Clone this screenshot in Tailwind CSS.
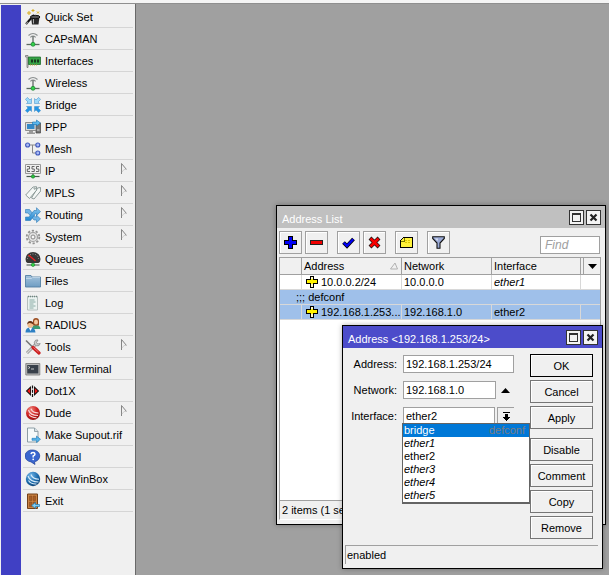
<!DOCTYPE html>
<html lang="en">
<head>
<meta charset="utf-8">
<meta name="viewport" content="width=device-width, initial-scale=1">
<title>WinBox</title>
<script src="https://cdn.jsdelivr.net/npm/@tailwindcss/browser@4"></script>
</head>
<body class="flex h-screen flex-col overflow-hidden bg-[#a0a0a0] font-['Liberation_Sans',Arial,sans-serif] text-[11px] leading-[14px] text-black">
<svg class="absolute size-0" aria-hidden="true">
  <defs>
    <linearGradient id="sky" x1="0" y1="0" x2="0" y2="1"><stop offset="0" stop-color="#8cc9ef"/><stop offset="1" stop-color="#1f86d1"/></linearGradient>
    <linearGradient id="folder" x1="0" y1="0" x2="0" y2="1"><stop offset="0" stop-color="#a4c3dc"/><stop offset="1" stop-color="#6f9dc3"/></linearGradient>
    <radialGradient id="blueball" cx=".35" cy=".25" r=".85"><stop offset="0" stop-color="#6fb4e8"/><stop offset=".6" stop-color="#1967a8"/><stop offset="1" stop-color="#0b3866"/></radialGradient>
    <radialGradient id="redball" cx=".35" cy=".25" r=".85"><stop offset="0" stop-color="#f08a80"/><stop offset=".5" stop-color="#cf2222"/><stop offset="1" stop-color="#8c0c0c"/></radialGradient>
    <symbol id="antenna" viewBox="0 0 16 16">
      <path d="M3.500 4.500Q8 .5 12.500 4.500M5.300 6.300Q8 4 10.700 6.300" fill="none" stroke="#8b9090" stroke-width="1.100"/>
      <path d="M8 5v8" stroke="#747b78" stroke-width="1.500"/>
      <path d="M1.500 13.500h13" stroke="#5c6a61" stroke-width="1.300"/>
      <circle cx="8" cy="13.300" r="2" fill="#35d04c" stroke="#16802b" stroke-width=".7"/>
    </symbol>
    <symbol id="sub" viewBox="0 0 6 11"><path d="M.5 11V.5L5.500 6.500" fill="none" stroke="#858585"/><path d="M5.500 6.500H3L1 9" fill="none" stroke="#cfcfcf"/></symbol>
    <symbol id="addr" viewBox="0 0 12 12" shape-rendering="crispEdges"><path d="M4 0h4v3h4v5H8v4H4V8H0V3h4z" fill="#000"/><path d="M5 1h2v3h4v3H7v4H5V7H1V4h4z" fill="#fff200"/><path d="M5 1h2v2H5zM5 8h2v3H5z" fill="#fffad0"/></symbol>
    <symbol id="max" viewBox="0 0 15 15" shape-rendering="crispEdges"><path d="M0 0h15v15H0z" fill="#333"/><path d="M1 1h13v13H1z" fill="#f4f4f4"/><path d="M3 3h9v9H3z" fill="#333"/><path d="M4 5h7v6H4z" fill="#f4f4f4"/></symbol>
    <symbol id="close" viewBox="0 0 15 15"><path d="M0 0h15v15H0z" fill="#333"/><path d="M1 1h13v13H1z" fill="#f4f4f4"/><path d="M4.500 4.500l6 6M10.500 4.500l-6 6" stroke="#222" stroke-width="2.200"/></symbol>
  </defs>
</svg>

<div class="h-1 shrink-0 border-b border-[#8f8f8f] bg-[#f4f4f4]"></div>
<div class="relative flex min-h-0 flex-1">
  <aside class="flex border-r border-[#696969] bg-[#f0f0f0] pl-px pt-px">
    <div class="w-5 bg-[#4040c4]"></div>
    <nav class="w-[114px] pl-0.5 pr-0.5 pt-px" aria-label="Main menu">
      <a href="#" class="flex h-[22px] items-center gap-1 border-b border-[#d5d5d5] pl-0.5">
        <svg class="size-4" viewBox="0 0 16 16"><path d="M1 15L9 6" stroke="#111" stroke-width="2"/><path d="M1 15l2-2" stroke="#888" stroke-width="1.500"/><path d="M6 8h8.500l-1 7.500H7z" fill="#292929"/><ellipse cx="10.200" cy="8" rx="4.800" ry="1.700" fill="#555" stroke="#111"/><path d="M8.500 10v4.500" stroke="#aaa"/><path d="M4 2v4M2 4h4M8 0v3M6.500 1.500h3M12 2.500l2 2M14 2.500L12 4.500" stroke="#d9ad1c" stroke-width="1"/></svg>Quick Set</a>
      <a href="#" class="flex h-[22px] items-center gap-1 border-b border-[#d5d5d5] pl-0.5"><svg class="size-4"><use href="#antenna"/></svg>CAPsMAN</a>
      <a href="#" class="flex h-[22px] items-center gap-1 border-b border-[#d5d5d5] pl-0.5">
        <svg class="size-4" viewBox="0 0 16 16"><path d="M.5 2.500h2.500v12H2V4H.5z" fill="#d8d8d8" stroke="#777" stroke-width=".8"/><path d="M3.500 4h12v7.500h-12z" fill="#36a346" stroke="#1d6d2c" stroke-width=".8"/><path d="M6 6.500h2v3H6zM9 6.500h2v3H9zM12 6.500h2v3h-2z" fill="#173a1d"/><path d="M5 12h8" stroke="#c7a43b" stroke-dasharray="1 1"/></svg>Interfaces</a>
      <a href="#" class="flex h-[22px] items-center gap-1 border-b border-[#d5d5d5] pl-0.5"><svg class="size-4"><use href="#antenna"/></svg>Wireless</a>
      <a href="#" class="flex h-[22px] items-center gap-1 border-b border-[#d5d5d5] pl-0.5">
        <svg class="size-4" viewBox="0 0 16 16" stroke="#3b89c4" stroke-width=".5"><path d="M6.500 6.500h-5L3 5 .4 2.400l2-2L5 3l1.500-1.500z" fill="#9ad8fa"/><path d="M9.500 6.500h5L13 5l2.600-2.600-2-2L11 3 9.500 1.500z" fill="#9ad8fa"/><path d="M6.500 9.500h-5L3 11 .4 13.600l2 2L5 13l1.500 1.500z" fill="#2495e4"/><path d="M9.500 9.500h5L13 11l2.600 2.600-2 2L11 13l-1.500 1.500z" fill="#2495e4"/></svg>Bridge</a>
      <a href="#" class="flex h-[22px] items-center gap-1 border-b border-[#d5d5d5] pl-0.5">
        <svg class="size-4" viewBox="0 0 16 16"><path d="M11 4h4.500v10H11z" fill="#777" stroke="#444" stroke-width=".7"/><path d="M12 11h2.500" stroke="#ddd"/><path d="M.5 3.500h10.500v8H.5z" fill="#ddd" stroke="#777" stroke-width=".8"/><path d="M2 5h7.500v5H2z" fill="#3488c6"/><path d="M4 12h4v1.500h2V15H2v-1.500h2z" fill="#999"/><path d="M7.500 5.500V3h4V1l4 3-4 3V5.500z" fill="#5cb8ee" stroke="#1770ad" stroke-width=".6"/></svg>PPP</a>
      <a href="#" class="flex h-[22px] items-center gap-1 border-b border-[#d5d5d5] pl-0.5">
        <svg class="size-4" viewBox="0 0 16 16"><path d="M4 4h7M7.500 4v8H11" fill="none" stroke="#888"/><g fill="#a9baf5" stroke="#4059bd" stroke-width="1.100"><circle cx="2.600" cy="4" r="2"/><circle cx="12.800" cy="4" r="2"/><circle cx="12.800" cy="12" r="2"/></g></svg>Mesh</a>
      <a href="#" class="flex h-[22px] items-center gap-1 border-b border-[#d5d5d5] pl-0.5">
        <svg class="size-4" viewBox="0 0 16 16"><path d="M.5 1.500h15v9H.5z" fill="#eee" stroke="#999"/><path d="M2 3.500h2.500V6H2.300v2.500H5M9.500 3.500H7V6h2.300v2.500H6.500M14 3.500h-2.500V6h2.300v2.500H11" fill="none" stroke="#555" stroke-width=".9"/><path d="M8 10.500V13" stroke="#555"/><path d="M1.500 13.500h13" stroke="#4a5a50" stroke-width="1.200"/><circle cx="8" cy="13.500" r="1.700" fill="#2cc33f" stroke="#157a28" stroke-width=".6"/></svg><span class="flex-1">IP</span><svg class="mb-1 mr-1.5 h-[11px] w-1.5"><use href="#sub"/></svg></a>
      <a href="#" class="flex h-[22px] items-center gap-1 border-b border-[#d5d5d5] pl-0.5">
        <svg class="size-4" viewBox="0 0 16 16" fill="#f4f7f6" stroke="#81918e" stroke-width=".9"><path d="M6.500 13l6-10 3-.5.2 3.500L9 14z"/><path d="M.7 10L8 2l3.500-.3.2 3.300L4.500 13.500z"/><circle cx="9.700" cy="3.600" r=".7"/></svg><span class="flex-1">MPLS</span><svg class="mb-1 mr-1.5 h-[11px] w-1.5"><use href="#sub"/></svg></a>
      <a href="#" class="flex h-[22px] items-center gap-1 border-b border-[#d5d5d5] pl-0.5">
        <svg class="size-4" viewBox="0 0 16 16" stroke="#2d79b5" stroke-width=".6"><path d="M.5 2.500h4l6 7.500h1V8l4 4-4 3.500v-2.500H9L3 6H.5z" fill="#70b4e6"/><path d="M.5 10H4l5-6.500h2.500V.7l4 4-4 3.800V6.500H10.500L5.500 13.500h-5z" fill="url(#sky)"/></svg><span class="flex-1">Routing</span><svg class="mb-1 mr-1.5 h-[11px] w-1.5"><use href="#sub"/></svg></a>
      <a href="#" class="flex h-[22px] items-center gap-1 border-b border-[#d5d5d5] pl-0.5">
        <svg class="size-4" viewBox="0 0 16 16" fill="none"><circle cx="8" cy="8" r="6.300" stroke="#929292" stroke-width="1.800" stroke-dasharray="2.200 1.760"/><circle cx="8" cy="8" r="4.500" fill="#e2e2e2" stroke="#a0a0a0" stroke-width="1.200"/><circle cx="8" cy="8" r="2" fill="#f7f7f7" stroke="#888"/></svg><span class="flex-1">System</span><svg class="mb-1 mr-1.5 h-[11px] w-1.5"><use href="#sub"/></svg></a>
      <a href="#" class="flex h-[22px] items-center gap-1 border-b border-[#d5d5d5] pl-0.5">
        <svg class="size-4" viewBox="0 0 16 16"><path d="M.5 8a7.500 7 0 0 1 15 0q0 3-2 4H2.500q-2-1-2-4z" fill="#383838"/><path d="M2.500 8a5.500 5 0 0 1 11 0" fill="none" stroke="#aaa" stroke-width="1" stroke-dasharray="1 1.500"/><path d="M3.500 4l7 6" stroke="#ee2020" stroke-width="1.300"/><path d="M1.500 14h13" stroke="#606a64" stroke-width="1.200"/><circle cx="8" cy="13.800" r="1.700" fill="#2fd545" stroke="#157a28" stroke-width=".6"/></svg>Queues</a>
      <a href="#" class="flex h-[22px] items-center gap-1 border-b border-[#d5d5d5] pl-0.5">
        <svg class="size-4" viewBox="0 0 16 16"><path d="M.5 14V2.500H6l1 1.500h8.500v10z" fill="url(#folder)" stroke="#5480a4" stroke-width=".9"/><path d="M1 5.500h5.500l1-1H15" fill="none" stroke="#c8dcec" stroke-width=".8"/></svg>Files</a>
      <a href="#" class="flex h-[22px] items-center gap-1 border-b border-[#d5d5d5] pl-0.5">
        <svg class="size-4" viewBox="0 0 16 16"><path d="M2.500 1.500h10v13.500h-10z" fill="#eaf2f0" stroke="#a6b2b0" stroke-width=".8"/><path d="M3 1.500h9.500" stroke="#6e8580" stroke-dasharray="1 1" stroke-width="1.500"/><path d="M4.500 5h5M4.500 7h6M4.500 9h4M4.500 11h6M4.500 13h4" stroke="#7fa39c" stroke-width=".9"/></svg>Log</a>
      <a href="#" class="flex h-[22px] items-center gap-1 border-b border-[#d5d5d5] pl-0.5">
        <svg class="size-4" viewBox="0 0 16 16"><path d="M7 12q0-4 4-4t4.500 4z" fill="#3d9b72"/><path d="M8 8.500V4q0-3 3-3t3 3v4.500z" fill="#9a4c20"/><ellipse cx="11" cy="5" rx="2" ry="2.500" fill="#f5c9a0"/><path d="M.5 15.500Q.5 10.500 5.300 10.500T10.500 15.500z" fill="#2e80c4"/><path d="M4 11l1.500 3L7 11z" fill="#fff"/><circle cx="5.300" cy="7.800" r="2.900" fill="#f1bb8c"/><path d="M2.300 7.500Q2 4 5.300 4t3 3.500Q6.500 5.500 4 6z" fill="#643014"/></svg>RADIUS</a>
      <a href="#" class="flex h-[22px] items-center gap-1 border-b border-[#d5d5d5] pl-0.5">
        <svg class="size-4" viewBox="0 0 16 16"><path d="M2 14L11 5" stroke="#8c8c8c" stroke-width="2.800"/><path d="M2 14L11 5" stroke="#d5d5d5" stroke-width="1.400"/><path d="M13 1a3 3 0 1 0 2.200 3.500L12.700 5 11.500 3.500z" fill="#ccc" stroke="#888" stroke-width=".8"/><path d="M1 1.500l7 7" stroke="#777" stroke-width="1.600"/><path d="M8 8.500l6 5.500" stroke="#cc2020" stroke-width="3.200" stroke-linecap="round"/><path d="M8.500 8.500l5 4.500" stroke="#f39191" stroke-width=".8"/></svg><span class="flex-1">Tools</span><svg class="mb-1 mr-1.5 h-[11px] w-1.5"><use href="#sub"/></svg></a>
      <a href="#" class="flex h-[22px] items-center gap-1 border-b border-[#d5d5d5] pl-0.5">
        <svg class="size-4" viewBox="0 0 16 16"><path d="M.8 2.500h14v11.500H.8z" fill="#bbb" stroke="#777" stroke-width=".8"/><path d="M2.200 4h11.200v8.500H2.200z" fill="#38404a"/><path d="M3.300 5.500l1.700 1-1.700 1M6 8h3" fill="none" stroke="#e8e8e8" stroke-width=".8"/></svg>New Terminal</a>
      <a href="#" class="flex h-[22px] items-center gap-1 border-b border-[#d5d5d5] pl-0.5">
        <svg class="size-4" viewBox="0 0 16 16"><path d="M6 3v10L.8 8zM9 3v10L14.200 8z" fill="#111"/><path d="M5.200 5.300v5.400L2.200 8zM9.800 5.300v5.400L12.800 8z" fill="#f01818"/><path d="M7.500 2.500v11.500" stroke="#111" stroke-width="1.200" stroke-dasharray="3 1.300"/></svg>Dot1X</a>
      <a href="#" class="flex h-[22px] items-center gap-1 border-b border-[#d5d5d5] pl-0.5">
        <svg class="size-4" viewBox="0 0 16 16"><circle cx="8" cy="8" r="7" fill="url(#redball)"/><path d="M3.500 5Q5 10.500 13 10.500M6 3.800Q7.500 8 13.500 8M4 9.500q2 3 7.500 3.200" fill="none" stroke="#f9dada" stroke-width="1.100"/></svg><span class="flex-1">Dude</span><svg class="mb-1 mr-1.5 h-[11px] w-1.5"><use href="#sub"/></svg></a>
      <a href="#" class="flex h-[22px] items-center gap-1 border-b border-[#d5d5d5] pl-0.5">
        <svg class="size-4" viewBox="0 0 16 16"><path d="M2.500 1h7l3.500 3.500V15H2.500z" fill="#f5f9fa" stroke="#82939c" stroke-width=".9"/><path d="M9.500 1v3.500H13" fill="#d5e1e6" stroke="#82939c" stroke-width=".8"/><path d="M7 11.300h4.500V9l4 3.300-4 3.200v-2.200H7z" fill="#55b4ea" stroke="#1b78b5" stroke-width=".6"/></svg>Make Supout.rif</a>
      <a href="#" class="flex h-[22px] items-center gap-1 border-b border-[#d5d5d5] pl-0.5">
        <svg class="size-4" viewBox="0 0 16 16"><path d="M8 1a7 6 0 0 1 1.500 11.800L10 15.500 6 12.900A7 6 0 0 1 8 1z" fill="#3a66cf" stroke="#1c3d96" stroke-width=".7"/><path d="M6 5.200Q6.200 3.500 8 3.500t2 1.600Q10 6.300 8.200 7v1.500" fill="none" stroke="#fff" stroke-width="1.500"/><circle cx="8.200" cy="10.300" r=".9" fill="#fff"/></svg>Manual</a>
      <a href="#" class="flex h-[22px] items-center gap-1 border-b border-[#d5d5d5] pl-0.5">
        <svg class="size-4" viewBox="0 0 16 16"><circle cx="8" cy="8" r="7.200" fill="url(#blueball)"/><path d="M3 5Q5 11 13.500 11M6 3.500Q7.500 8 14 8.300M3.500 9.500q2.500 4 8 3.500" fill="none" stroke="#d7ebf9" stroke-width="1.100"/></svg>New WinBox</a>
      <a href="#" class="flex h-[22px] items-center gap-1 border-b border-[#d5d5d5] pl-0.5">
        <svg class="size-4" viewBox="0 0 16 16"><path d="M2.500 1h10v14.500h-10z" fill="#c98142" stroke="#744018"/><path d="M4.500 3h2.300v4.500H4.500zM8.200 3h2.300v4.500H8.200zM4.500 9h2.300v4.500H4.500zM8.200 9h2.300v4.500H8.200z" fill="#a65d28" stroke="#824516" stroke-width=".5"/><path d="M14.500 11.500H10.500V9.500L6.700 12.500l3.800 3v-2h4z" fill="#80cef4" stroke="#1f7db6" stroke-width=".7"/></svg>Exit</a>
    </nav>
  </aside>

  <main class="relative min-w-0 flex-1">
    <section class="absolute left-[140px] top-[201px] flex h-80 w-[330px] flex-col border border-black bg-[#f0f0f0] px-0.5 pb-1 shadow-[0_0_5px_rgb(0_0_0/0.3)]" aria-label="Address List">
      <header class="-mx-0.5 flex h-[22px] items-center gap-0.5 bg-[#c0c0c0] pl-[5px] pr-1 text-white">
        <h2 class="flex-1 pt-1">Address List</h2>
        <button aria-label="Maximize"><svg class="size-[15px]"><use href="#max"/></svg></button>
        <button aria-label="Close"><svg class="size-[15px]"><use href="#close"/></svg></button>
      </header>
      <div class="flex h-[29px] items-start gap-[3px] pr-[3px] pt-[3px]">
        <button aria-label="Add" class="grid size-[23px] place-items-center border border-[#a0a0a0] shadow-[inset_1px_1px_#fff]"><svg class="size-[13px]" viewBox="0 0 13 13" shape-rendering="crispEdges"><path d="M4 0h5v4h4v5H9v4H4V9H0V4h4z" fill="#000"/><path d="M5 1h3v4h4v3H8v4H5V8H1V5h4z" fill="#0000f5"/></svg></button>
        <button aria-label="Remove" class="grid size-[23px] place-items-center border border-[#a0a0a0] shadow-[inset_1px_1px_#fff]"><svg class="size-[13px]" viewBox="0 0 13 13" shape-rendering="crispEdges"><path d="M0 4h13v5H0z" fill="#222"/><path d="M1 5h11v3H1z" fill="#f00000"/></svg></button>
        <button aria-label="Enable" class="ml-1.5 grid size-[23px] place-items-center border border-[#a0a0a0] shadow-[inset_1px_1px_#fff]"><svg class="size-[13px]" viewBox="0 0 13 13"><path d="M1.500 6.500l3.500 3.500 6.500-7" fill="none" stroke="#000" stroke-width="3.800"/><path d="M1.800 6.700l3.200 3.200 6.200-6.600" fill="none" stroke="#0000f5" stroke-width="2.300"/></svg></button>
        <button aria-label="Disable" class="grid size-[23px] place-items-center border border-[#a0a0a0] shadow-[inset_1px_1px_#fff]"><svg class="size-[13px]" viewBox="0 0 13 13"><path d="M2 2l9 9M11 2l-9 9" stroke="#111" stroke-width="4"/><path d="M2.500 2.500l8 8M10.500 2.500l-8 8" stroke="#f80000" stroke-width="2.800"/></svg></button>
        <button aria-label="Comment" class="ml-1.5 grid size-[23px] place-items-center border border-[#a0a0a0] shadow-[inset_1px_1px_#fff]"><svg class="h-[11px] w-[13px]" viewBox="0 0 13 11" shape-rendering="crispEdges"><path d="M3.500.5h9v9.500H.5V3.500z" fill="#fff33a" stroke="#000"/><path d="M1 4h3V1" fill="none" stroke="#777700"/><path d="M5 3h6M5 5h6" stroke="#e0c800" stroke-dasharray="2 1"/></svg></button>
        <button aria-label="Filter" class="ml-1.5 grid size-[23px] place-items-center border border-[#a0a0a0] shadow-[inset_1px_1px_#fff]"><svg class="size-[13px]" viewBox="0 0 13 13"><path d="M.7.7h11.600v1.800L8 7v5.300H5V7L.7 2.500z" fill="#9aaad6" stroke="#111" stroke-width="1.100"/><path d="M3 2.500h3L5.500 5z" fill="#dce3f5"/></svg></button>
        <input aria-label="Find" placeholder="Find" class="ml-auto mt-[5px] h-[18px] w-[60px] border border-[#a0a0a0] bg-white px-1 text-xs italic placeholder:text-[#a0a0a0]">
      </div>
      <div class="mr-0.5 flex-1 border-x border-b border-[#a0a0a0] bg-white">
        <table class="w-full table-fixed border-separate border-spacing-0 text-left">
          <colgroup><col class="w-[22px]"><col class="w-[100px]"><col class="w-[90px]"><col class="w-[89px]"><col></colgroup>
          <thead class="bg-[#f0f0f0]">
            <tr class="h-[18px]">
              <th class="border-y border-r border-[#a0a0a0] p-0"></th>
              <th class="border-y border-r border-[#a0a0a0] p-0 pl-0.5 font-normal"><div class="flex items-center justify-between pr-[3px]">Address<svg class="h-2 w-2" viewBox="0 0 8 8"><path d="M.5 7L5 1l2.500 6z" fill="none" stroke="#b0b0b0"/></svg></div></th>
              <th class="border-y border-r border-[#a0a0a0] p-0 pl-0.5 font-normal">Network</th>
              <th class="border-y border-r border-[#a0a0a0] p-0 pl-0.5 font-normal">Interface</th>
              <th class="border-y border-[#a0a0a0] p-0"><button aria-label="Columns" class="ml-0.5 flex h-4 w-[17px] items-center justify-center border-l border-[#a0a0a0]"><svg class="h-[5px] w-[9px]" viewBox="0 0 9 5"><path d="M0 0h9L4.500 5z"/></svg></button></th>
            </tr>
          </thead>
          <tbody>
            <tr class="h-[15px]">
              <td class="border-b border-r border-[#d8d8d8] p-0"></td>
              <td class="border-b border-r border-[#d8d8d8] p-0 pl-1"><div class="flex items-center gap-[3px]"><svg class="size-3"><use href="#addr"/></svg>10.0.0.2/24</div></td>
              <td class="border-b border-r border-[#d8d8d8] p-0 pl-0.5">10.0.0.0</td>
              <td class="border-b border-r border-[#d8d8d8] p-0 pl-0.5 italic">ether1</td>
              <td class="border-b border-[#d8d8d8] p-0"></td>
            </tr>
            <tr class="h-[15px] bg-[#9fc0ea]"><td colspan="5" class="border-b border-[#d8d8d8] p-0 pl-4">;;; defconf</td></tr>
            <tr class="h-[15px] bg-[#9fc0ea]">
              <td class="border-b border-r border-[#d8d8d8] p-0"></td>
              <td class="border-b border-r border-[#d8d8d8] p-0 pl-1"><div class="flex items-center gap-[3px]"><svg class="size-3"><use href="#addr"/></svg>192.168.1.253...</div></td>
              <td class="border-b border-r border-[#d8d8d8] p-0 pl-0.5">192.168.1.0</td>
              <td class="border-b border-r border-[#d8d8d8] p-0 pl-0.5">ether2</td>
              <td class="border-b border-[#d8d8d8] p-0"></td>
            </tr>
          </tbody>
        </table>
      </div>
      <footer class="mr-0.5 flex h-[19px] items-center border-b border-l border-b-white border-l-[#a0a0a0] pl-0.5">2 items (1 sel</footer>
    </section>

    <section class="absolute left-[206px] top-[321px] flex w-[261px] flex-col border border-black bg-[#f0f0f0] shadow-[0_0_5px_rgb(0_0_0/0.3)]" aria-label="Address">
      <header class="flex h-[22px] items-center gap-0.5 bg-[#4c4cca] pl-[5px] pr-1 text-white">
        <h2 class="flex-1 pt-1">Address &lt;192.168.1.253/24&gt;</h2>
        <button aria-label="Maximize"><svg class="size-[15px]"><use href="#max"/></svg></button>
        <button aria-label="Close"><svg class="size-[15px]"><use href="#close"/></svg></button>
      </header>
      <form class="flex justify-between pr-[9px] pt-1.5">
        <div class="flex flex-col gap-2 pt-px">
          <div class="flex items-center"><label for="address" class="w-[54px] text-right">Address:</label><input id="address" value="192.168.1.253/24" class="ml-1.5 h-[18px] w-[111px] border border-[#a0a0a0] bg-white px-0.5"></div>
          <div class="flex items-center"><label for="network" class="w-[54px] text-right">Network:</label><input id="network" value="192.168.1.0" class="ml-1.5 h-[18px] w-[93px] border border-[#a0a0a0] bg-white px-0.5"><button type="button" aria-label="Collapse network" class="grid h-[18px] w-[18px] place-items-center"><svg class="h-[5px] w-[9px]" viewBox="0 0 9 5"><path d="M0 5h9L4.500 0z"/></svg></button></div>
          <div class="relative flex items-center"><label for="interface" class="w-[54px] text-right">Interface:</label><select id="interface" class="ml-1.5 h-[18px] w-[92px] appearance-none border border-[#a0a0a0] bg-white px-0.5"><option>bridge</option><option>ether1</option><option selected>ether2</option><option>ether3</option><option>ether4</option><option>ether5</option></select><button type="button" aria-label="Show interfaces" class="ml-0.5 grid h-[18px] w-[17px] place-items-center border-l border-t border-[#a0a0a0]"><svg class="h-[9px] w-[7px]" viewBox="0 0 7 9" shape-rendering="crispEdges"><path d="M0 0h7v1H0zM2 2h3v3h2v1H6v1H5v1H4v1H3V8H2V7H1V6H0V5h2z"/></svg></button>
            <ul role="listbox" aria-label="Interface" class="absolute left-[59px] top-4 z-10 w-32 border border-b-2 border-[#646464] bg-white leading-[13px]">
              <li role="option" aria-selected="true" class="flex justify-between bg-[#0078d7] pl-px pr-1 text-white">bridge<span class="text-[#7c7c80]">defconf</span></li>
              <li role="option" class="pl-px italic">ether1</li>
              <li role="option" class="pl-px">ether2</li>
              <li role="option" class="pl-px italic">ether3</li>
              <li role="option" class="pl-px italic">ether4</li>
              <li role="option" class="pl-px italic">ether5</li>
            </ul>
          </div>
        </div>
        <div class="flex w-[63px] flex-col gap-[3px]">
          <button type="button" class="h-[23px] border border-black shadow-[inset_1px_1px_#fff]">OK</button>
          <button type="button" class="h-[23px] border border-[#767676] shadow-[inset_1px_1px_#fff]">Cancel</button>
          <button type="button" class="h-[23px] border border-[#767676] shadow-[inset_1px_1px_#fff]">Apply</button>
          <button type="button" class="mt-1.5 h-[23px] border border-[#767676] shadow-[inset_1px_1px_#fff]">Disable</button>
          <button type="button" class="h-[23px] border border-[#767676] shadow-[inset_1px_1px_#fff]">Comment</button>
          <button type="button" class="h-[23px] border border-[#767676] shadow-[inset_1px_1px_#fff]">Copy</button>
          <button type="button" class="h-[23px] border border-[#767676] shadow-[inset_1px_1px_#fff]">Remove</button>
        </div>
      </form>
      <footer class="mb-1 ml-0.5 mr-1 mt-1.5 flex h-[19px] items-center border-l border-t border-[#a0a0a0] pl-px">enabled</footer>
    </section>
  </main>
</div>
</body>
</html>
